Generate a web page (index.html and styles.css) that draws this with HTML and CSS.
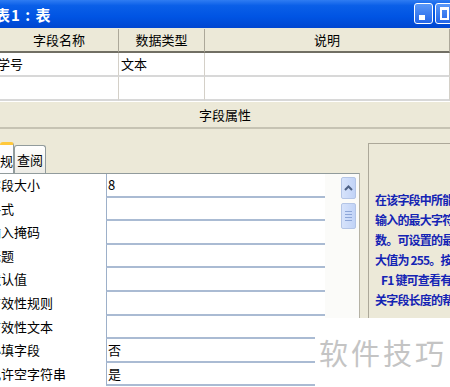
FILE: index.html
```html
<!DOCTYPE html>
<html lang="zh-CN">
<head>
  <meta charset="UTF-8" />
  <title>表1 : 表</title>
  <link rel="stylesheet" href="styles.css">
</head>
<body>

<div class="titlebar">
  <span class="title">表1 : 表</span>
  <div class="win-btns">
    <span class="win-btn"><i class="min"></i></span>
    <span class="win-btn"><i class="max"></i></span>
  </div>
</div>

<div class="fields">
  <div class="head">字段名称</div>
  <div class="head">数据类型</div>
  <div class="head">说明</div>
  <div class="cell name">学号</div>
  <div class="cell">文本</div>
  <div class="cell"></div>
  <div class="cell name"></div>
  <div class="cell"></div>
  <div class="cell"></div>
</div>

<div class="section-bar">字段属性</div>

<div class="props">
  <div class="props-left">
    <div class="tabs">
      <span class="tab active"><span class="cut">常规</span></span>
      <span class="tab">查阅</span>
    </div>
    <div class="grid">
      <div class="rows">
        <div class="row"><span class="label">字段大小</span><span class="value">8</span></div>
        <div class="row"><span class="label">格式</span><span class="value"></span></div>
        <div class="row"><span class="label">输入掩码</span><span class="value"></span></div>
        <div class="row"><span class="label">标题</span><span class="value"></span></div>
        <div class="row"><span class="label">默认值</span><span class="value"></span></div>
        <div class="row"><span class="label">有效性规则</span><span class="value"></span></div>
        <div class="row"><span class="label">有效性文本</span><span class="value"></span></div>
        <div class="row"><span class="label">必填字段</span><span class="value">否</span></div>
        <div class="row"><span class="label">允许空字符串</span><span class="value">是</span></div>
      </div>
      <div class="scroll">
        <span class="scroll-up">
          <svg width="9" height="6" viewBox="0 0 9 6"><path d="M1 5 L4.5 1.5 L8 5" fill="none" stroke="#4d6185" stroke-width="2"/></svg>
        </span>
        <span class="scroll-thumb"><i></i><i></i><i></i><i></i></span>
      </div>
    </div>
  </div>
  <div class="help">
    <span>在该字段中所能</span>
    <span>输入的最大字符</span>
    <span>数。可设置的最</span>
    <span>大值为 255。按</span>
    <span class="indent">F1 键可查看有</span>
    <span>关字段长度的帮</span>
  </div>
</div>

<div class="watermark">软件技巧</div>

</body>
</html>
```

FILE: styles.css
```css
body {
  margin: 0;
  width: 450px;
  height: 387px;
  overflow: hidden;
  position: relative;
  background: #ece9d8;
  font-family: "Noto Sans CJK SC", "DejaVu Sans", sans-serif;
  font-size: 13px;
  color: #000;
}
.titlebar {
  height: 28px;
  display: flex;
  align-items: center;
  justify-content: space-between;
  background: linear-gradient(#2f7cf2 0%, #0a5fe8 20%, #0054e3 60%, #0046d0 100%);
}
.title {
  color: #fff;
  font-size: 15px;
  font-weight: bold;
  margin-left: -5px;
  letter-spacing: 1px;
}
.win-btns {
  display: flex;
  gap: 2px;
  align-self: flex-start;
  margin-top: 3px;
  margin-right: -4px;
}
.win-btn {
  width: 19px;
  height: 21px;
  border: 1px solid #fff;
  border-radius: 3px;
  background: linear-gradient(#5a98f8, #2366e8);
  display: flex;
  align-items: center;
  justify-content: center;
  box-sizing: border-box;
}
.min {
  width: 6px;
  height: 5px;
  background: #fff;
  margin-top: 7px;
  margin-left: -4px;
}
.max {
  width: 9px;
  height: 13px;
  border: 2px solid #fff;
  border-top-width: 3px;
  box-sizing: border-box;
}
.fields {
  display: grid;
  grid-template-columns: 119px 86px 1fr;
  margin-top: 1px;
}
.head {
  height: 22px;
  line-height: 22px;
  text-align: center;
  background: #ece9d8;
  border-right: 1px solid #aca899;
  border-bottom: 2px solid #716f64;
}
.cell {
  height: 22px;
  line-height: 22px;
  background: #fff;
  border-right: 1px solid #d4d0c8;
  border-bottom: 2px solid #d8d8d8;
  padding-left: 2px;
}
.cell.name {
  padding-left: 0;
  text-indent: -3px;
}
.section-bar {
  height: 25px;
  line-height: 25px;
  text-align: center;
  border-top: 1px solid #fff;
  border-bottom: 2px solid #c6c3b3;
}
.props {
  display: flex;
}
.props-left {
  width: 360px;
  padding-top: 12px;
}
.tabs {
  display: flex;
  align-items: flex-end;
  height: 32px;
}
.tab {
  height: 27px;
  line-height: 27px;
  padding: 0 2px;
  border: 1px solid #919b9c;
  border-bottom: none;
  border-radius: 3px 3px 0 0;
  background: linear-gradient(#fff, #ecebe5);
}
.tab.active {
  height: 31px;
  line-height: 31px;
  width: 14px;
  overflow: hidden;
  border-left: none;
  border-top: 3px solid #ffc83c;
  padding: 0;
  background: #fcfcfe;
  box-sizing: border-box;
}
.cut {
  display: block;
  margin-left: -13px;
  white-space: nowrap;
}
.grid {
  display: flex;
  border-top: 1px solid #919b9c;
  border-right: 1px solid #b5b2a5;
  background: #fbfbf9;
  height: 220px;
}
.rows {
  width: 325px;
  background: #fff;
}
.row {
  display: flex;
  height: 23.6px;
  box-sizing: border-box;
}
.label {
  width: 106px;
  white-space: nowrap;
  overflow: hidden;
  text-indent: -12px;
  line-height: 22px;
}
.value {
  flex: 1;
  border-left: 1px solid #9db0c9;
  border-bottom: 2px solid #aabbd3;
  line-height: 22px;
  padding-left: 1px;
}
.scroll {
  flex: 1;
  display: flex;
  flex-direction: column;
  align-items: flex-end;
  padding: 3px 3px 0 0;
  gap: 4px;
}
.scroll-up, .scroll-thumb {
  width: 13px;
  border: 1px solid #b4c5e6;
  border-radius: 2px;
  background: linear-gradient(90deg, #d7e3fb, #c1d3f7);
  display: flex;
  align-items: center;
  justify-content: center;
}
.scroll-up {
  height: 20px;
}
.scroll-thumb {
  height: 24px;
  flex-direction: column;
  gap: 2px;
}
.scroll-thumb i {
  width: 7px;
  height: 1px;
  background: #8da6d8;
}
.help {
  flex: 1;
  display: flex;
  flex-direction: column;
  margin: 14px 0 0 8px;
  border-left: 1px solid #aca899;
  border-top: 1px solid #aca899;
  padding: 46px 0 0 6px;
  color: #1424b4;
  font-size: 12px;
  line-height: 20px;
  font-weight: bold;
  letter-spacing: -0.8px;
  white-space: nowrap;
  overflow: hidden;
}
.help .indent {
  padding-left: 6px;
}
.watermark {
  position: absolute;
  left: 315px;
  top: 318px;
  width: 135px;
  height: 69px;
  background: #fff;
  color: #c4c4c4;
  font-size: 29px;
  line-height: 69px;
  padding-left: 4px;
  letter-spacing: 3px;
  box-sizing: border-box;
}
```
